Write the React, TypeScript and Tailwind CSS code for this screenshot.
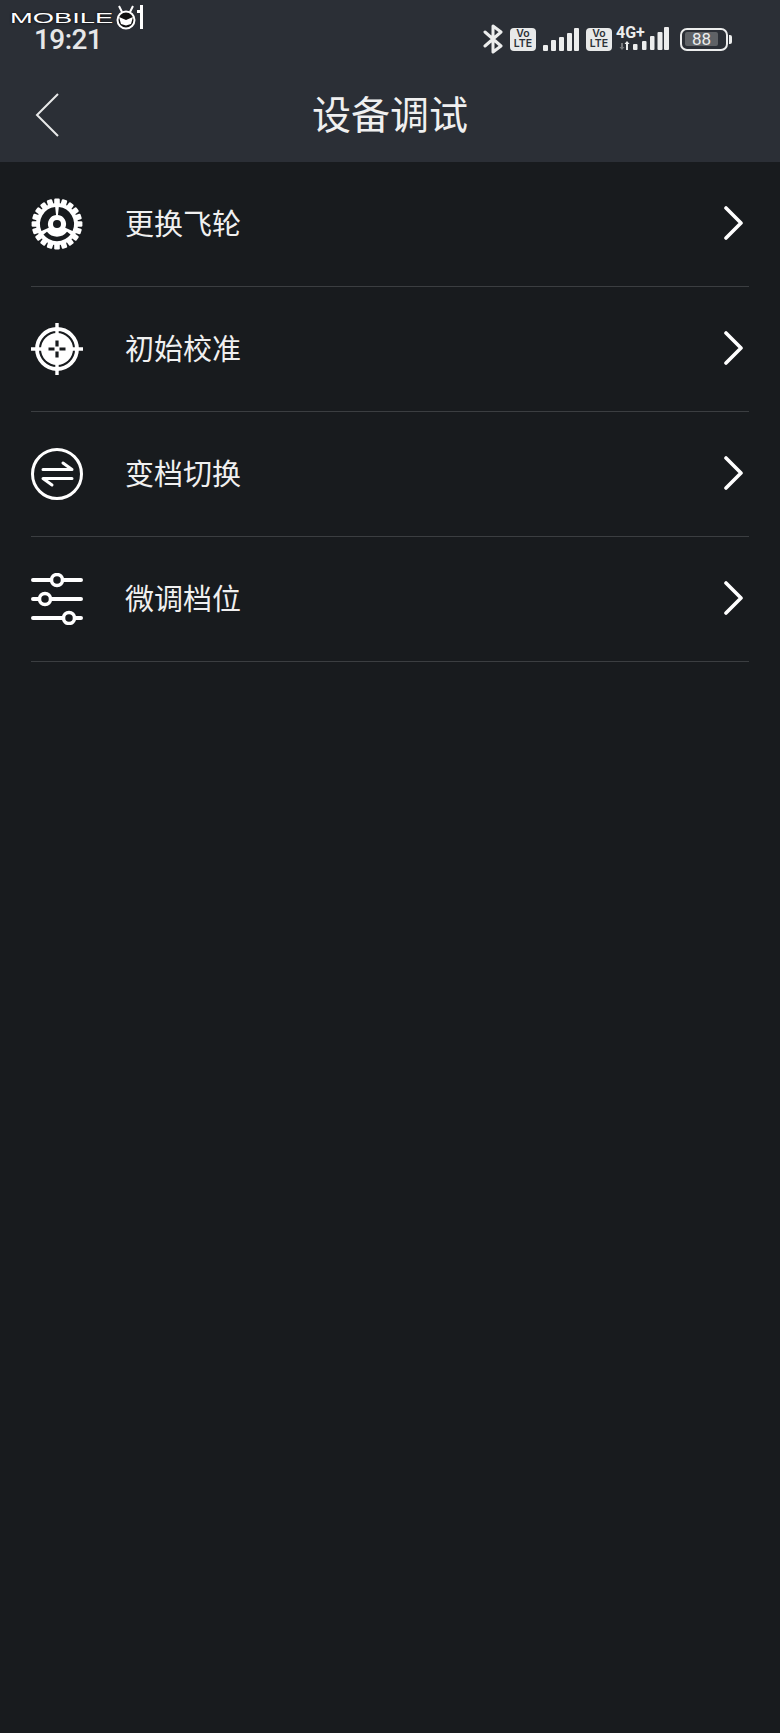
const cjk = "font-['Noto_Sans_CJK_SC','Noto_Sans',sans-serif]";
const BG = "#181b1e";

const rows = [
  { label: "更换飞轮", icon: <GearIcon /> },
  { label: "初始校准", icon: <TargetIcon /> },
  { label: "变档切换", icon: <SwapIcon /> },
  { label: "微调档位", icon: <SlidersIcon /> },
];

function GearIcon() {
  const teeth = Array.from({ length: 20 }, (_, i) => i * 18);
  return (
    <svg width="52" height="52" viewBox="0 0 52 52" fill="none">
      {teeth.map((deg) => (
        <rect key={deg} x="23.2" y="0.600" width="5.600" height="7" rx="1.200" fill="#fff" transform={`rotate(${deg} 26 26)`} />
      ))}
      <circle cx="26" cy="26" r="21" fill="#fff" />
      <circle cx="26" cy="26" r="4" fill={BG} />
      <path d="M27.400 13.100A13 13 0 0 1 37.900 31.300M24.600 13.100A13 13 0 0 0 14.100 31.300" stroke={BG} strokeWidth="8" />
      <path d="M37.800 35.200A15 15 0 0 1 14.200 35.200" stroke={BG} strokeWidth="4.500" />
    </svg>
  );
}

function TargetIcon() {
  return (
    <svg width="52" height="52" viewBox="0 0 52 52" fill="none">
      <circle cx="26" cy="26" r="20" stroke="#fff" strokeWidth="3.800" />
      <circle cx="26" cy="26" r="16" fill="#fff" />
      <path d="M26 0v12M26 40v12M0 26h12M40 26h12" stroke="#fff" strokeWidth="3.400" />
      <path d="M26 17.500v6M26 28.500v6M17.500 26h6M28.500 26h6" stroke={BG} strokeWidth="3.200" />
    </svg>
  );
}

function SwapIcon() {
  return (
    <svg width="52" height="52" viewBox="0 0 52 52" fill="none" stroke="#fff" strokeLinecap="round" strokeLinejoin="round">
      <circle cx="26" cy="26" r="24.500" strokeWidth="3" />
      <path d="M12 21.500h29l-9-6.500M41 30.500H12l9 6.500" strokeWidth="3" />
    </svg>
  );
}

function SlidersIcon() {
  return (
    <svg width="52" height="52" viewBox="0 0 52 52" fill="none" stroke="#fff" strokeLinecap="round">
      <path d="M2 7h48M2 26h48M2 45h48" strokeWidth="4" />
      <circle cx="26" cy="7" r="5.500" fill={BG} strokeWidth="3.500" />
      <circle cx="14" cy="26" r="5.500" fill={BG} strokeWidth="3.500" />
      <circle cx="38" cy="45" r="5.500" fill={BG} strokeWidth="3.500" />
    </svg>
  );
}

function Signal() {
  return (
    <svg width="36" height="23" viewBox="0 0 36 23" fill="#eceded">
      <rect x="0" y="17" width="5" height="6" rx="1" />
      <rect x="8" y="12" width="5" height="11" rx="1" />
      <rect x="16" y="9" width="5" height="14" rx="1" />
      <rect x="24" y="5" width="5" height="18" rx="1" />
      <rect x="31" y="0" width="5" height="23" rx="1" />
    </svg>
  );
}

function VoLte() {
  return (
    <div className="flex h-[23px] w-[26px] flex-col items-center justify-center rounded-[4px] bg-[#e8e9e9] font-['Inter',sans-serif] text-[10.500px] leading-[10.500px] font-semibold text-[#2b3037]">
      <span>Vo</span>
      <span>LTE</span>
    </div>
  );
}

function StatusBar() {
  return (
    <div className="flex h-[78px] items-start justify-between pt-[24px] pr-[48px] pl-[34px] font-['Roboto',sans-serif]">
      <span className="mt-[3px] text-[28px] leading-[26px] font-medium tracking-[-0.6px] text-[#e6e7e8]">19:21</span>
      <div className="flex h-[30px] items-center">
        <svg width="20" height="30" viewBox="0 0 20 30" fill="none" stroke="#eceded" strokeWidth="3" strokeLinecap="round" strokeLinejoin="round">
          <path d="M2 8l16 14-8 6V2l8 6L2 22" />
        </svg>
        <div className="ml-[7px]"><VoLte /></div>
        <div className="ml-[7px]"><Signal /></div>
        <div className="ml-[7px]"><VoLte /></div>
        <div className="relative ml-[4px] h-[24px] w-[53px]">
          <svg className="absolute top-0 left-0" width="53" height="24" viewBox="0 0 53 24" fill="#eceded">
            <path d="M5 16h2v4h1.500L6 23l-2.500-3H5z" fill="#77797c" />
            <path d="M11 14l2.500 3H12v6h-2v-6H8.500z" />
            <rect x="17" y="17" width="4.500" height="6" rx="1" />
            <rect x="26" y="14" width="4.500" height="9" rx="1" />
            <rect x="34" y="9" width="4.500" height="14" rx="1" />
            <rect x="41.500" y="5" width="5" height="18" rx="1" />
            <rect x="48" y="0" width="5" height="23" rx="1" />
          </svg>
          <span className="absolute top-[-2px] left-0 text-[16px] leading-[16px] font-bold text-[#eceded]">4G+</span>
        </div>
        <div className="ml-[11px] flex h-[23px] w-[48px] items-center rounded-[7px] border-[2.500px] border-[#eceded] pl-[3px]">
          <div className="h-[14px] w-[33px] rounded-[2px] bg-[#5f6266] text-center text-[17px] leading-[14px] text-[#eceded]">88</div>
        </div>
        <div className="ml-[1px] h-[9px] w-[3px] rounded-r-[2px] bg-[#eceded]" />
      </div>
    </div>
  );
}

export default function App() {
  return (
    <div className={`relative min-h-[1733px] w-[780px] bg-[#181b1e] ${cjk}`}>
      {/* watermark */}
      <div className="absolute top-[5px] left-[10px] flex items-center">
        <span className="mt-[2px] w-[103px] origin-left scale-x-[1.95] font-['Liberation_Sans',sans-serif] text-[14px] leading-[11px] whitespace-nowrap text-white [text-shadow:0_0_2px_#000]">
          MOBILE
        </span>
        <svg width="30" height="25" viewBox="0 0 30 25" fill="none" className="ml-[1px]">
          <circle cx="12" cy="15" r="8.500" fill="#111" stroke="#fff" strokeWidth="2" />
          <path d="M5 1l3 6M19 1l-3 6" stroke="#fff" strokeWidth="2" />
          <path d="M5 12l7 3 7-3-2 7-5 1.500L7 19z" fill="#fff" />
          <path d="M26 0h3v24h-3zM23 5h3v3h-3z" fill="#fff" />
        </svg>
      </div>

      <header className="h-[162px] bg-[#2b2f36]">
        <StatusBar />
        <div className="relative flex h-[74px] items-center justify-center">
          <svg className="absolute top-[15px] left-[35px]" width="24" height="44" viewBox="0 0 24 44" fill="none" stroke="#e8e9e9" strokeWidth="2">
            <path d="M23 1 2 22l21 21" />
          </svg>
          <h1 className="pb-[6px] text-[39px] leading-none font-normal text-[#f0f0f0]">设备调试</h1>
        </div>
      </header>

      <div className="px-[31px]">
        {rows.map((row) => (
          <div key={row.label} className="flex h-[125px] items-center border-b border-[#3b3e41]">
            <div className="w-[94px]">{row.icon}</div>
            <span className="pb-[4px] text-[29px] leading-none text-[#f0f0f0]">{row.label}</span>
            <svg className="mr-[6px] mb-[2px] ml-auto" width="20" height="34" viewBox="0 0 20 34" fill="none" stroke="#fff" strokeWidth="3.600" strokeLinecap="round" strokeLinejoin="round">
              <path d="M3 2l15 15L3 32" />
            </svg>
          </div>
        ))}
      </div>
    </div>
  );
}
